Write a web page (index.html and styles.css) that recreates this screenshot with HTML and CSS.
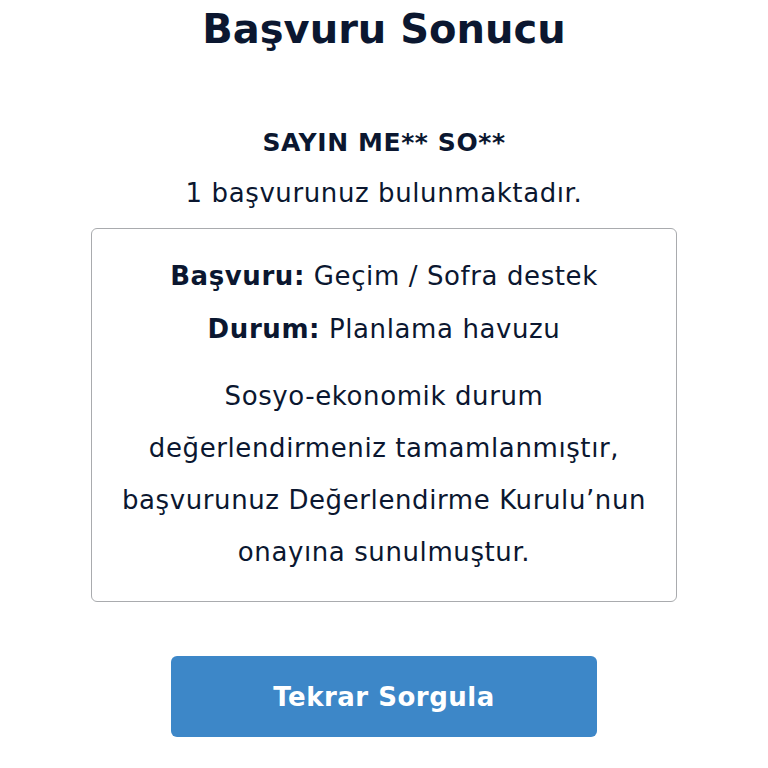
FILE: index.html
```html
<!DOCTYPE html>
<html lang="tr">
<head>
  <meta charset="UTF-8">
  <title>Başvuru Sonucu</title>
  <link rel="stylesheet" href="styles.css">
</head>
<body>

<div class="page">
  <h1>Başvuru Sonucu</h1>

  <p class="greeting">SAYIN ME** SO**</p>
  <p class="count">1 başvurunuz bulunmaktadır.</p>

  <div class="result-box">
    <p class="row"><b>Başvuru:</b> Geçim / Sofra destek</p>
    <p class="row"><b>Durum:</b> Planlama havuzu</p>
    <p class="desc">Sosyo-ekonomik durum değerlendirmeniz tamamlanmıştır, başvurunuz Değerlendirme Kurulu’nun onayına sunulmuştur.</p>
  </div>

  <button class="retry-btn">Tekrar Sorgula</button>
</div>

</body>
</html>
```

FILE: styles.css
```css
body {
  margin: 0;
  background: #fff;
  color: #0b1730;
  font-family: 'DejaVu Sans', 'Noto Sans', sans-serif;
}

.page {
  display: flex;
  flex-direction: column;
  align-items: center;
  text-align: center;
}

h1 {
  margin: 0;
  padding-top: 3px;
  font-size: 40px;
  font-weight: 700;
  line-height: 52px;
}

.greeting {
  margin: 71px 0 0;
  font-size: 25px;
  font-weight: 700;
  letter-spacing: 0.6px;
  line-height: 34px;
}

.count {
  margin: 16px 0 0;
  font-size: 26px;
  letter-spacing: 0.6px;
  line-height: 34px;
}

.result-box {
  box-sizing: border-box;
  width: 586px;
  margin-top: 18px;
  padding: 21px 22px 23px;
  border: 1.5px solid #a9abae;
  border-radius: 6px;
  font-size: 26px;
  letter-spacing: 0.6px;
}

.row {
  margin: 0;
  line-height: 53px;
}

.row b {
  font-weight: 700;
}

.desc {
  margin: 14px 0 0;
  line-height: 52px;
}

.retry-btn {
  margin-top: 54px;
  width: 426px;
  height: 81px;
  border: none;
  border-radius: 6px;
  background: #3d87c8;
  color: #fff;
  font-family: inherit;
  font-size: 26px;
  font-weight: 700;
  letter-spacing: 0.5px;
  cursor: pointer;
}
```
